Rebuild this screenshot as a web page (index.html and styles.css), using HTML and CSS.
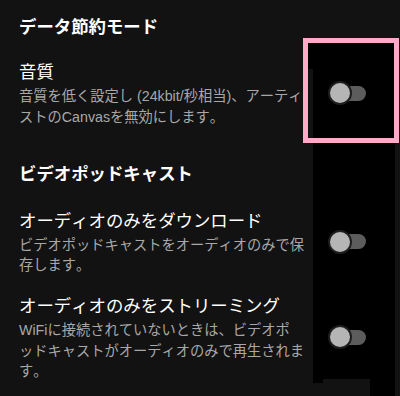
FILE: index.html
```html
<!DOCTYPE html>
<html lang="ja">
<head>
<meta charset="utf-8">
<title>データ節約モード</title>
<link rel="stylesheet" href="styles.css">
</head>
<body>
<div class="screen">
  <h2 class="section-title">データ節約モード</h2>
  <div class="row">
    <div class="text">
      <div class="row-title">音質</div>
      <div class="row-desc">音質を低く設定し (24kbit/秒相当)、アーティストのCanvasを無効にします。</div>
    </div>
    <div class="toggle"><span class="track"></span><span class="thumb"></span></div>
  </div>

  <h2 class="section-title second">ビデオポッドキャスト</h2>
  <div class="row">
    <div class="text">
      <div class="row-title">オーディオのみをダウンロード</div>
      <div class="row-desc">ビデオポッドキャストをオーディオのみで保存します。</div>
    </div>
    <div class="toggle"><span class="track"></span><span class="thumb"></span></div>
  </div>
  <div class="row">
    <div class="text">
      <div class="row-title">オーディオのみをストリーミング</div>
      <div class="row-desc">WiFiに接続されていないときは、ビデオポ<br>ッドキャストがオーディオのみで再生されます。</div>
    </div>
    <div class="toggle"><span class="track"></span><span class="thumb"></span></div>
  </div>

  <div class="mask mask-top"></div>
  <div class="mask mask-col"></div>
  <div class="mask mask-foot-left"></div>
  <div class="mask mask-foot-right"></div>
  <div class="highlight"></div>
</div>
</body>
</html>
```

FILE: styles.css
```css
* { box-sizing: border-box; }
html, body {
  margin: 0;
  padding: 0;
  background: #121212;
}
.screen {
  position: relative;
  width: 400px;
  height: 396px;
  overflow: hidden;
  padding: 14px 0 0 19px;
  background: #121212;
  font-family: "Noto Sans CJK JP", "Noto Sans", sans-serif;
  font-kerning: none;
  color: #ffffff;
}
.section-title {
  margin: 0 0 21px 0;
  font-size: 17.4px;
  line-height: 24px;
  font-weight: 700;
  color: #ffffff;
}
.section-title.second {
  margin-top: 34px;
  margin-bottom: 22.5px;
}
.row {
  display: flex;
  align-items: center;
  margin-bottom: 17.5px;
}
.text {
  flex: 0 0 285.5px;
  width: 285.5px;
}
.row-title {
  font-size: 17.4px;
  line-height: 24px;
  font-weight: 400;
  color: #ffffff;
}
.row-desc {
  margin-top: 3px;
  font-family: "Liberation Sans", "Noto Sans CJK JP", sans-serif;
  font-size: 14.25px;
  line-height: 20.5px;
  color: #a8a8a8;
}
.toggle {
  position: relative;
  z-index: 2;
  flex: 0 0 38px;
  width: 38px;
  height: 24px;
  margin-left: 23.5px;
}
.track {
  position: absolute;
  left: 7px;
  top: 4.5px;
  width: 31px;
  height: 15px;
  border-radius: 8px;
  background: #5c5c5c;
}
.thumb {
  position: absolute;
  left: 0;
  top: 0;
  width: 24px;
  height: 24px;
  border-radius: 50%;
  background: #b5b5b5;
  border: 2px solid #1e1e1e;
}
.mask {
  position: absolute;
  z-index: 1;
  background: #000000;
}
.mask-top {
  left: 308px;
  top: 43px;
  width: 86px;
  height: 26px;
}
.mask-col {
  left: 313px;
  top: 69px;
  width: 82px;
  height: 310px;
}
.mask-foot-left {
  left: 313px;
  top: 378px;
  width: 10px;
  height: 5px;
}
.mask-foot-right {
  left: 370px;
  top: 378px;
  width: 25px;
  height: 18px;
}
.highlight {
  position: absolute;
  z-index: 3;
  left: 303px;
  top: 38px;
  width: 96px;
  height: 105px;
  border: 5px solid #ffabc8;
}
```
